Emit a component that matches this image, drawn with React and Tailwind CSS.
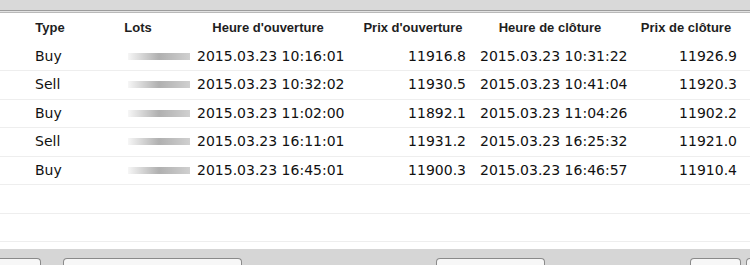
const trades = [
  { type: 'Buy', open: '2015.03.23 10:16:01', openPrice: '11916.8', close: '2015.03.23 10:31:22', closePrice: '11926.9' },
  { type: 'Sell', open: '2015.03.23 10:32:02', openPrice: '11930.5', close: '2015.03.23 10:41:04', closePrice: '11920.3' },
  { type: 'Buy', open: '2015.03.23 11:02:00', openPrice: '11892.1', close: '2015.03.23 11:04:26', closePrice: '11902.2' },
  { type: 'Sell', open: '2015.03.23 16:11:01', openPrice: '11931.2', close: '2015.03.23 16:25:32', closePrice: '11921.0' },
  { type: 'Buy', open: '2015.03.23 16:45:01', openPrice: '11900.3', close: '2015.03.23 16:46:57', closePrice: '11910.4' },
];

const cols = 'grid grid-cols-[100px_76px_184px_106px_168px_104px_12px]';

function LotsBlur() {
  return (
    <div className="ml-[28px] w-[62px] h-[7px] blur-[0.6px] bg-gradient-to-r from-[#f6f6f6] via-[#b0b0b0] to-[#d0d0d0]" />
  );
}

export default function App() {
  return (
    <div className="w-[750px] h-[265px] overflow-hidden bg-white flex flex-col" style={{ fontFamily: '"DejaVu Sans", Verdana, sans-serif' }}>
      <div className="h-[11px] bg-[#d9d9d9] border-b border-[#9d9d9d]" />
      <div className="h-[1px] bg-[#e2e2e2]" />
      <div className="h-[1px] bg-[#b9b9b9]" />

      <div className={`${cols} h-[29.5px] items-center text-[13px] font-bold text-[#1e1e1e]`} style={{ fontFamily: '"Liberation Sans", Arial, sans-serif' }}>
        <div className="text-center">Type</div>
        <div className="text-center">Lots</div>
        <div className="text-center">Heure d'ouverture</div>
        <div className="text-center">Prix d'ouverture</div>
        <div className="text-center">Heure de clôture</div>
        <div className="text-center">Prix de clôture</div>
        <div />
      </div>

      {trades.map((t, i) => (
        <div key={i} className={`${cols} h-[28.5px] items-center border-b border-[#eeeeee] text-[14px] text-[#111]`}>
          <div className="pl-[35px]">{t.type}</div>
          <div><LotsBlur /></div>
          <div className="pl-[21px] whitespace-nowrap">{t.open}</div>
          <div className="text-right">{t.openPrice}</div>
          <div className="pl-[14px] whitespace-nowrap">{t.close}</div>
          <div className="text-right pr-[1px]">{t.closePrice}</div>
          <div />
        </div>
      ))}
      {[0, 1].map(i => (
        <div key={i} className="h-[28.5px] border-b border-[#eeeeee]" />
      ))}

      <div className="h-[6.5px]" />
      <div className="flex-1 bg-[#d6d6d6] flex items-end">
        <div className="shrink-0 -ml-[5px] w-[46px] h-[7px] rounded-t-[4px] border border-b-0 border-[#8a8a8a] bg-[#f7f7f7]" />
        <div className="shrink-0 ml-[22px] w-[179px] h-[7px] rounded-t-[4px] border border-b-0 border-[#8a8a8a] bg-[#f7f7f7]" />
        <div className="shrink-0 ml-[194px] w-[109px] h-[7px] rounded-t-[4px] border border-b-0 border-[#8a8a8a] bg-[#f7f7f7]" />
        <div className="shrink-0 ml-[145px] w-[51px] h-[7px] rounded-t-[4px] border border-b-0 border-[#8a8a8a] bg-[#f7f7f7]" />
        <div className="shrink-0 ml-[5px] w-[20px] h-[7px] rounded-t-[4px] border border-b-0 border-[#8a8a8a] bg-[#f7f7f7]" />
      </div>
    </div>
  );
}
